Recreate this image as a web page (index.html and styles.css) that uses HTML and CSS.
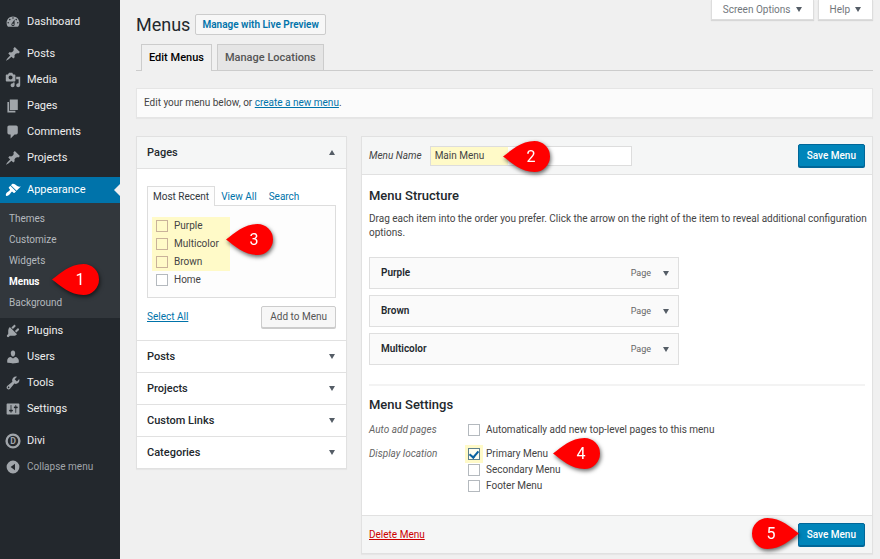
FILE: index.html
```html
<!DOCTYPE html>
<html lang="en">
<head>
    <meta charset="utf-8">
    <title>Menus</title>
    <link rel="stylesheet" href="styles.css">
</head>
<body>
    <nav class="sidebar">
        <ul class="menu">
            <li><a href="#"><svg viewBox="0 0 20 20"><path fill-rule="evenodd" d="M3.76 16h12.48c1.1-1.37 1.76-3.11 1.76-5 0-4.42-3.58-8-8-8s-8 3.58-8 8c0 1.89.66 3.63 1.76 5zM10 4c.55 0 1 .45 1 1s-.45 1-1 1-1-.45-1-1 .45-1 1-1zM6 6c.55 0 1 .45 1 1s-.45 1-1 1-1-.45-1-1 .45-1 1-1zm8 0c.55 0 1 .45 1 1s-.45 1-1 1-1-.45-1-1 .45-1 1-1zm-5.37 5.55L12 7v6c0 1.1-.9 2-2 2s-2-.9-2-2c0-.57.24-1.08.63-1.45zM4 10c.55 0 1 .45 1 1s-.45 1-1 1-1-.45-1-1 .45-1 1-1zm12 0c.55 0 1 .45 1 1s-.45 1-1 1-1-.45-1-1 .45-1 1-1zm-5 3c0-.55-.45-1-1-1s-1 .45-1 1 .45 1 1 1 1-.45 1-1z"/></svg>Dashboard</a></li>
            <li class="separator"></li>
            <li><a href="#"><svg viewBox="0 0 20 20"><path d="M10.44 3.02l1.82-1.82 6.36 6.35-1.83 1.82c-1.05-.68-2.48-.57-3.41.36l-.75.75c-.92.93-1.04 2.35-.35 3.41l-1.83 1.82-2.41-2.41-2.8 2.79c-.42.42-3.38 2.71-3.8 2.29s1.86-3.39 2.28-3.81l2.79-2.79L4.1 9.36l1.83-1.82c1.05.69 2.48.57 3.4-.36l.75-.75c.93-.92 1.05-2.35.36-3.41z"/></svg>Posts</a></li>
            <li><a href="#"><svg viewBox="0 0 20 20"><path fill-rule="evenodd" d="M13 11V4c0-.55-.45-1-1-1h-1.67L9 1H5L3.67 3H2c-.55 0-1 .45-1 1v7c0 .55.45 1 1 1h10c.55 0 1-.45 1-1zM7 4.5c1.38 0 2.5 1.12 2.5 2.5S8.38 9.5 7 9.5 4.5 8.38 4.5 7 5.62 4.5 7 4.5zM14 6h5v10.5c0 1.38-1.12 2.5-2.5 2.5S14 17.88 14 16.5s1.12-2.5 2.5-2.5c.17 0 .34.02.5.05V9h-3V6zm-4 8.05V13h2v3.5c0 1.38-1.12 2.5-2.5 2.5S7 17.88 7 16.5 8.12 14 9.5 14c.17 0 .34.02.5.05z"/></svg>Media</a></li>
            <li><a href="#"><svg viewBox="0 0 20 20"><path d="M6 15V2h10v13H6zm-1 1h8v2H3V5h2v11z"/></svg>Pages</a></li>
            <li><a href="#"><svg viewBox="0 0 20 20"><path d="M5 2h9c1.1 0 2 .9 2 2v7c0 1.1-.9 2-2 2h-2l-5 5v-5H5c-1.1 0-2-.9-2-2V4c0-1.1.9-2 2-2z"/></svg>Comments</a></li>
            <li><a href="#"><svg viewBox="0 0 20 20"><path d="M10.44 3.02l1.82-1.82 6.36 6.35-1.83 1.82c-1.05-.68-2.48-.57-3.41.36l-.75.75c-.92.93-1.04 2.35-.35 3.41l-1.83 1.82-2.41-2.41-2.8 2.79c-.42.42-3.38 2.71-3.8 2.29s1.86-3.39 2.28-3.81l2.79-2.79L4.1 9.36l1.83-1.82c1.05.69 2.48.57 3.4-.36l.75-.75c.93-.92 1.05-2.35.36-3.41z"/></svg>Projects</a></li>
            <li class="separator"></li>
            <li class="current">
                <a href="#"><svg viewBox="0 0 20 20"><path d="M14.48 11.06L7.41 3.99l1.5-1.5c.5-.56 2.3-.47 3.51.32 1.21.8 1.43 1.28 2.91 2.1 1.18.64 2.45 1.26 4.45.85zm-.71.71L6.7 4.7 4.93 6.47c-.39.39-.39 1.02 0 1.41l1.06 1.06c.39.39.39 1.03 0 1.42-.6.6-1.43 1.11-2.21 1.69-.35.26-.7.53-1.01.84C1.43 14.23.4 16.08 1.4 17.07c.99 1 2.84-.03 4.18-1.36.31-.31.58-.66.85-1.02.57-.78 1.08-1.61 1.69-2.21.39-.39 1.02-.39 1.41 0l1.06 1.06c.39.39 1.02.39 1.41 0z"/></svg>Appearance</a>
                <ul class="submenu">
                    <li><a href="#">Themes</a></li>
                    <li><a href="#">Customize</a></li>
                    <li><a href="#">Widgets</a></li>
                    <li class="active">
                        <a href="#">Menus</a>
                        <svg class="pin pin-1" viewBox="0 0 47 31"><path d="M0 15.5C9 9 18 0 31.500 0a15.500 15.500 0 0 1 0 31C18 31 9 22 0 15.500z"/><text x="28" y="21">1</text></svg>
                    </li>
                    <li><a href="#">Background</a></li>
                </ul>
            </li>
            <li><a href="#"><svg viewBox="0 0 20 20"><path d="M13.11 4.36L9.87 7.6 8 5.73l3.24-3.24c.35-.34 1.05-.2 1.56.32.52.51.66 1.21.31 1.55zm-8 1.77l.91-1.12 9.01 9.01-1.19.84c-.71.71-2.63 1.16-3.82 1.16H6.14L4.9 17.26c-.59.59-1.54.59-2.12 0-.59-.58-.59-1.53 0-2.12l1.24-1.24v-3.88c0-1.13.4-3.19 1.09-3.89zm7.26 3.97l3.24-3.24c.34-.35 1.04-.21 1.55.31.52.51.66 1.21.31 1.55l-3.24 3.25z"/></svg>Plugins</a></li>
            <li><a href="#"><svg viewBox="0 0 20 20"><path d="M10 9.25c-2.27 0-2.73-3.44-2.73-3.44C7 4.02 7.82 2 9.97 2c2.16 0 2.98 2.02 2.71 3.81 0 0-.41 3.44-2.68 3.44zm0 2.57L12.72 10c2.39 0 4.52 2.33 4.52 4.53v2.49s-3.65 1.13-7.24 1.13c-3.65 0-7.24-1.13-7.24-1.13v-2.49c0-2.25 1.94-4.48 4.47-4.48z"/></svg>Users</a></li>
            <li><a href="#"><svg viewBox="0 0 20 20"><path fill-rule="evenodd" d="M16.68 9.77c-1.34 1.34-3.3 1.67-4.95.99l-5.41 6.52c-.99.99-2.59.99-3.58 0s-.99-2.59 0-3.57l6.52-5.42c-.68-1.65-.35-3.61.99-4.95 1.28-1.28 3.12-1.62 4.72-1.06l-2.89 2.89 2.82 2.82 2.86-2.87c.53 1.58.18 3.39-1.08 4.65zM3.81 16.21c.4.39 1.04.39 1.43 0 .4-.4.4-1.04 0-1.43-.39-.4-1.03-.4-1.43 0-.39.39-.39 1.03 0 1.43z"/></svg>Tools</a></li>
            <li><a href="#"><svg viewBox="0 0 20 20"><path fill-rule="evenodd" d="M18 16V4c0-.55-.45-1-1-1H3c-.55 0-1 .45-1 1v12c0 .55.45 1 1 1h14c.55 0 1-.45 1-1zM8 11h1c.55 0 1 .45 1 1s-.45 1-1 1H8v1.5c0 .28-.22.5-.5.5s-.5-.22-.5-.5V13H6c-.55 0-1-.45-1-1s.45-1 1-1h1V5.5c0-.28.22-.5.5-.5s.5.22.5.5V11zm5-2h-1c-.55 0-1-.45-1-1s.45-1 1-1h1V5.5c0-.28.22-.5.5-.5s.5.22.5.5V7h1c.55 0 1 .45 1 1s-.45 1-1 1h-1v5.500c0 .28-.22.5-.5.5s-.5-.22-.5-.5V9z"/></svg>Settings</a></li>
            <li class="separator"></li>
            <li><a href="#"><svg viewBox="0 0 20 20"><circle class="ring" cx="10" cy="10" r="8"/><text class="logo-letter" x="10" y="14">D</text></svg>Divi</a></li>
            <li class="collapse"><a href="#"><svg viewBox="0 0 20 20"><path fill-rule="evenodd" d="M10 2a8 8 0 1 0 0 16 8 8 0 0 0 0-16zM12.500 6v8L7 10z"/></svg>Collapse menu</a></li>
        </ul>
    </nav>

    <main class="content">
        <header class="page-header">
            <div class="title">
                <h1>Menus</h1>
                <a class="title-action" href="#">Manage with Live Preview</a>
            </div>
            <div class="screen-meta">
                <button type="button">Screen Options <span class="arrow"></span></button>
                <button type="button">Help <span class="arrow"></span></button>
            </div>
        </header>

        <div class="nav-tabs">
            <a class="nav-tab nav-tab-active" href="#">Edit Menus</a>
            <a class="nav-tab" href="#">Manage Locations</a>
        </div>

        <div class="notice">Edit your menu below, or <a href="#">create a new menu</a>.</div>

        <div class="columns">
            <section class="panel accordion">
                <h3 class="open">Pages <span class="arrow up"></span></h3>
                <div class="accordion-body">
                    <div class="tabs">
                        <a class="active" href="#">Most Recent</a>
                        <a href="#">View All</a>
                        <a href="#">Search</a>
                    </div>
                    <div class="checklist">
                        <div class="highlight">
                            <label><input type="checkbox">Purple</label>
                            <label><input type="checkbox">Multicolor</label>
                            <label><input type="checkbox">Brown</label>
                            <svg class="pin pin-3" viewBox="0 0 47 31"><path d="M0 15.5C9 9 18 0 31.500 0a15.500 15.500 0 0 1 0 31C18 31 9 22 0 15.500z"/><text x="28" y="21">3</text></svg>
                        </div>
                        <label><input type="checkbox">Home</label>
                    </div>
                    <div class="actions">
                        <a href="#">Select All</a>
                        <button class="button" type="button">Add to Menu</button>
                    </div>
                </div>
                <h3>Posts <span class="arrow"></span></h3>
                <h3>Projects <span class="arrow"></span></h3>
                <h3>Custom Links <span class="arrow"></span></h3>
                <h3>Categories <span class="arrow"></span></h3>
            </section>

            <form class="panel editor">
                <div class="editor-bar editor-header">
                    <label for="menu-name">Menu Name</label>
                    <div class="name-field">
                        <input type="text" id="menu-name" value="Main Menu">
                        <svg class="pin pin-2" viewBox="0 0 47 31"><path d="M0 15.5C9 9 18 0 31.500 0a15.500 15.500 0 0 1 0 31C18 31 9 22 0 15.500z"/><text x="28" y="21">2</text></svg>
                    </div>
                    <button class="button primary" type="button">Save Menu</button>
                </div>

                <div class="editor-body">
                    <h2>Menu Structure</h2>
                    <p>Drag each item into the order you prefer. Click the arrow on the right of the item to reveal additional configuration options.</p>
                    <ul class="menu-items">
                        <li><strong>Purple</strong><span>Page</span><span class="arrow"></span></li>
                        <li><strong>Brown</strong><span>Page</span><span class="arrow"></span></li>
                        <li><strong>Multicolor</strong><span>Page</span><span class="arrow"></span></li>
                    </ul>

                    <div class="settings">
                        <h2>Menu Settings</h2>
                        <fieldset>
                            <legend>Auto add pages</legend>
                            <div class="options">
                                <label><input type="checkbox">Automatically add new top-level pages to this menu</label>
                            </div>
                        </fieldset>
                        <fieldset>
                            <legend>Display location</legend>
                            <div class="options">
                                <label class="marked"><input type="checkbox" checked>Primary Menu</label>
                                <label><input type="checkbox">Secondary Menu</label>
                                <label><input type="checkbox">Footer Menu</label>
                                <svg class="pin pin-4" viewBox="0 0 47 31"><path d="M0 15.5C9 9 18 0 31.500 0a15.500 15.500 0 0 1 0 31C18 31 9 22 0 15.500z"/><text x="28" y="21">4</text></svg>
                            </div>
                        </fieldset>
                    </div>
                </div>

                <div class="editor-bar editor-footer">
                    <a class="delete" href="#">Delete Menu</a>
                    <button class="button primary" type="button">Save Menu</button>
                    <svg class="pin pin-5" viewBox="0 0 47 31"><path d="M47 15.500C38 9 29 0 15.500 0a15.500 15.500 0 0 0 0 31C29 31 38 22 47 15.500z"/><text x="19" y="21">5</text></svg>
                </div>
            </form>
        </div>
    </main>
</body>
</html>
```

FILE: styles.css
```css
* {
    box-sizing: border-box;
    margin: 0;
    padding: 0;
}

body {
    display: flex;
    min-height: 100vh;
    background: #f0f0f0;
    color: #444;
    font-family: Roboto, "Open Sans", sans-serif;
    font-size: 10px;
    line-height: 14px;
}

ul {
    list-style: none;
}

a {
    color: #0073aa;
}

button,
input {
    font: inherit;
    color: inherit;
}

/* Sidebar */
.sidebar {
    flex: 0 0 120px;
    padding-top: 9px;
    background: #23282d;
}

.menu a {
    display: flex;
    align-items: center;
    gap: 6px;
    height: 26px;
    padding-left: 5px;
    color: #eee;
    font-size: 11px;
    text-decoration: none;
}

.menu a svg {
    width: 16px;
    height: 16px;
    fill: #a0a5aa;
}

.menu .separator {
    height: 6px;
}

.menu .current > a {
    position: relative;
    background: #0073aa;
    color: #fff;
}

.menu .current > a svg {
    fill: #fff;
}

.menu .current > a::after {
    content: "";
    position: absolute;
    right: 0;
    top: 7px;
    border: 6px solid transparent;
    border-left-width: 0;
    border-right-color: #f0f0f0;
}

.submenu {
    padding: 5px 0;
    background: #32373c;
}

.submenu li {
    position: relative;
}

.submenu a {
    height: 21px;
    padding-left: 9px;
    color: #b4b9be;
    font-size: 10px;
}

.submenu .active a {
    color: #fff;
    font-weight: 700;
}

.menu .collapse a {
    color: #a0a5aa;
    font-size: 10px;
}

.menu .ring {
    fill: none;
    stroke: #a0a5aa;
    stroke-width: 3;
}

.logo-letter {
    font-size: 11px;
    font-weight: 700;
    text-anchor: middle;
}

/* Page header */
.content {
    flex: 1;
    min-width: 0;
    padding: 0 7px 6px 16px;
}

.page-header {
    display: flex;
    justify-content: space-between;
    align-items: flex-start;
    height: 44px;
}

.title {
    display: flex;
    align-items: center;
    gap: 5px;
    padding-top: 14px;
}

h1 {
    color: #23282d;
    font-size: 18px;
    font-weight: 400;
    line-height: 21px;
}

.title-action {
    padding: 3px 6px 2px;
    border: 1px solid #ccc;
    border-radius: 2px;
    background: #f7f7f7;
    font-weight: 600;
    text-decoration: none;
}

.screen-meta {
    display: flex;
    gap: 4px;
}

.screen-meta button {
    display: flex;
    align-items: center;
    gap: 5px;
    height: 20px;
    padding: 0 11px;
    border: 1px solid #ddd;
    border-top: 0;
    background: #fff;
    box-shadow: 0 1px 1px rgba(0, 0, 0, 0.1);
    color: #72777c;
}

.arrow {
    flex: none;
    border: 3px solid transparent;
    border-top: 5px solid #555d66;
    border-bottom: 0;
}

.arrow.up {
    border-top: 0;
    border-bottom: 5px solid #555d66;
}

.nav-tabs {
    display: flex;
    gap: 5px;
    padding-left: 5px;
    border-bottom: 1px solid #ccc;
}

.nav-tab {
    height: 26px;
    padding: 0 7px;
    border: 1px solid #ccc;
    border-bottom: 0;
    background: #e5e5e5;
    color: #555;
    font-size: 11px;
    font-weight: 500;
    line-height: 26px;
    text-decoration: none;
}

.nav-tab-active {
    height: 27px;
    margin-bottom: -1px;
    background: #f0f0f0;
    color: #000;
}

.notice {
    margin: 17px 0 18px;
    padding: 7px;
    border: 1px solid #e5e5e5;
    background: #fbfbfb;
    box-shadow: 0 1px 1px rgba(0, 0, 0, 0.04);
}

/* Panels */
.columns {
    display: flex;
    align-items: flex-start;
    gap: 14px;
}

.panel {
    border: 1px solid #e1e1e1;
    background: #fff;
    box-shadow: 0 1px 1px rgba(0, 0, 0, 0.04);
}

.accordion {
    flex: 0 0 211px;
}

.accordion h3 {
    display: flex;
    justify-content: space-between;
    align-items: center;
    height: 32px;
    padding: 0 11px 0 10px;
    border-top: 1px solid #e1e1e1;
    color: #23282d;
    font-size: 11px;
    font-weight: 500;
}

.accordion h3.open {
    border-top: 0;
    border-bottom: 1px solid #e1e1e1;
    background: #f5f6f6;
}

.accordion-body {
    padding: 17px 10px 12px;
}

.tabs {
    display: flex;
    margin-bottom: -1px;
}

.tabs a {
    height: 20px;
    padding: 0 5px;
    border: 1px solid transparent;
    border-bottom: 0;
    line-height: 20px;
    text-decoration: none;
}

.tabs a.active {
    border-color: #ddd;
    background: #fdfdfd;
    color: #32373c;
}

.checklist {
    padding: 11px 4px 8px;
    border: 1px solid #ddd;
    background: #fdfdfd;
}

.checklist label {
    display: flex;
    align-items: center;
    gap: 6px;
    height: 18px;
    padding-left: 4px;
}

.highlight {
    position: relative;
    width: 78px;
    background: #fffac8;
}

input[type="checkbox"] {
    appearance: none;
    flex: none;
    width: 12px;
    height: 12px;
    border: 1px solid #b4b9be;
    background: #fff;
}

.highlight input[type="checkbox"] {
    border-color: #c9b29a;
    background: #fffac8;
}

.actions {
    display: flex;
    justify-content: space-between;
    align-items: center;
    padding-top: 8px;
}

.button {
    height: 22px;
    padding: 0 8px;
    border: 1px solid #ccc;
    border-radius: 2px;
    background: #f7f7f7;
    box-shadow: 0 1px 0 #ccc;
    color: #555;
}

.button.primary {
    height: 23px;
    margin-left: auto;
    border-color: #006799;
    background: #0085ba;
    box-shadow: 0 1px 0 #006799;
    color: #fff;
    font-weight: 500;
}

/* Menu editor */
.editor {
    flex: 1;
    min-width: 0;
}

.editor-bar {
    position: relative;
    display: flex;
    align-items: center;
    height: 38px;
    padding: 0 7px;
    background: #f5f6f6;
}

.editor-header {
    gap: 8px;
    border-bottom: 1px solid #e1e1e1;
}

.editor-footer {
    border-top: 1px solid #e1e1e1;
}

.editor-header label,
legend {
    font-style: italic;
}

.name-field {
    position: relative;
    flex: 0 1 202px;
}

.name-field input {
    display: block;
    width: 100%;
    height: 20px;
    padding: 0 4px;
    border: 1px solid #ddd;
    background: linear-gradient(90deg, #fffac8 77px, #fff 77px);
}

.editor-body {
    padding: 12px 7px 21px;
}

h2 {
    color: #23282d;
    font-size: 13px;
    font-weight: 500;
    line-height: 18px;
}

/* the intro text runs to the panel edge */
.editor-body p {
    margin-right: -7px;
    padding: 7px 0 17px;
}

.menu-items {
    display: grid;
    gap: 6px;
    max-width: 310px;
}

.menu-items li {
    display: flex;
    align-items: center;
    height: 32px;
    padding: 0 9px 0 11px;
    border: 1px solid #dfdfdf;
    background: #fafafa;
    color: #666;
    font-size: 9px;
}

.menu-items strong {
    flex: 1;
    color: #23282d;
    font-size: 10px;
    font-weight: 600;
}

.menu-items .arrow {
    margin-left: 12px;
}

.settings {
    margin-top: 19px;
    padding-top: 10px;
    border-top: 2px solid #f3f3f3;
}

fieldset {
    display: flex;
    padding-top: 8px;
    border: 0;
}

legend {
    float: left;
    width: 99px;
    color: #666;
    line-height: 16px;
}

.options {
    position: relative;
}

.options label {
    display: flex;
    align-items: center;
    gap: 6px;
    height: 16px;
}

.marked input[type="checkbox"] {
    border-color: #5b7f8c;
    background: #fffef0;
    box-shadow: 0 0 0 3px #fffac8;
}

.marked input[type="checkbox"]::before {
    content: "";
    display: block;
    width: 4px;
    height: 7px;
    margin: 0 auto;
    border: solid #0a62a0;
    border-width: 0 2px 2px 0;
    transform: rotate(40deg);
}

.delete {
    color: #c00;
}

/* Numbered pins */
.pin {
    position: absolute;
    z-index: 1;
    width: 47px;
    height: 31px;
    overflow: visible;
    filter: drop-shadow(1px 2px 2px rgba(0, 0, 0, 0.6));
}

.pin path {
    fill: #f00;
}

.pin text {
    fill: #fff;
    font-size: 16px;
    text-anchor: middle;
}

.pin-1 {
    left: 52px;
    top: -7px;
}

.pin-2 {
    left: 73px;
    top: -5px;
}

.pin-3 {
    left: 74px;
    top: 7px;
}

.pin-4 {
    left: 85px;
    top: -8px;
}

.pin-5 {
    right: 73px;
    top: 2px;
}
```
